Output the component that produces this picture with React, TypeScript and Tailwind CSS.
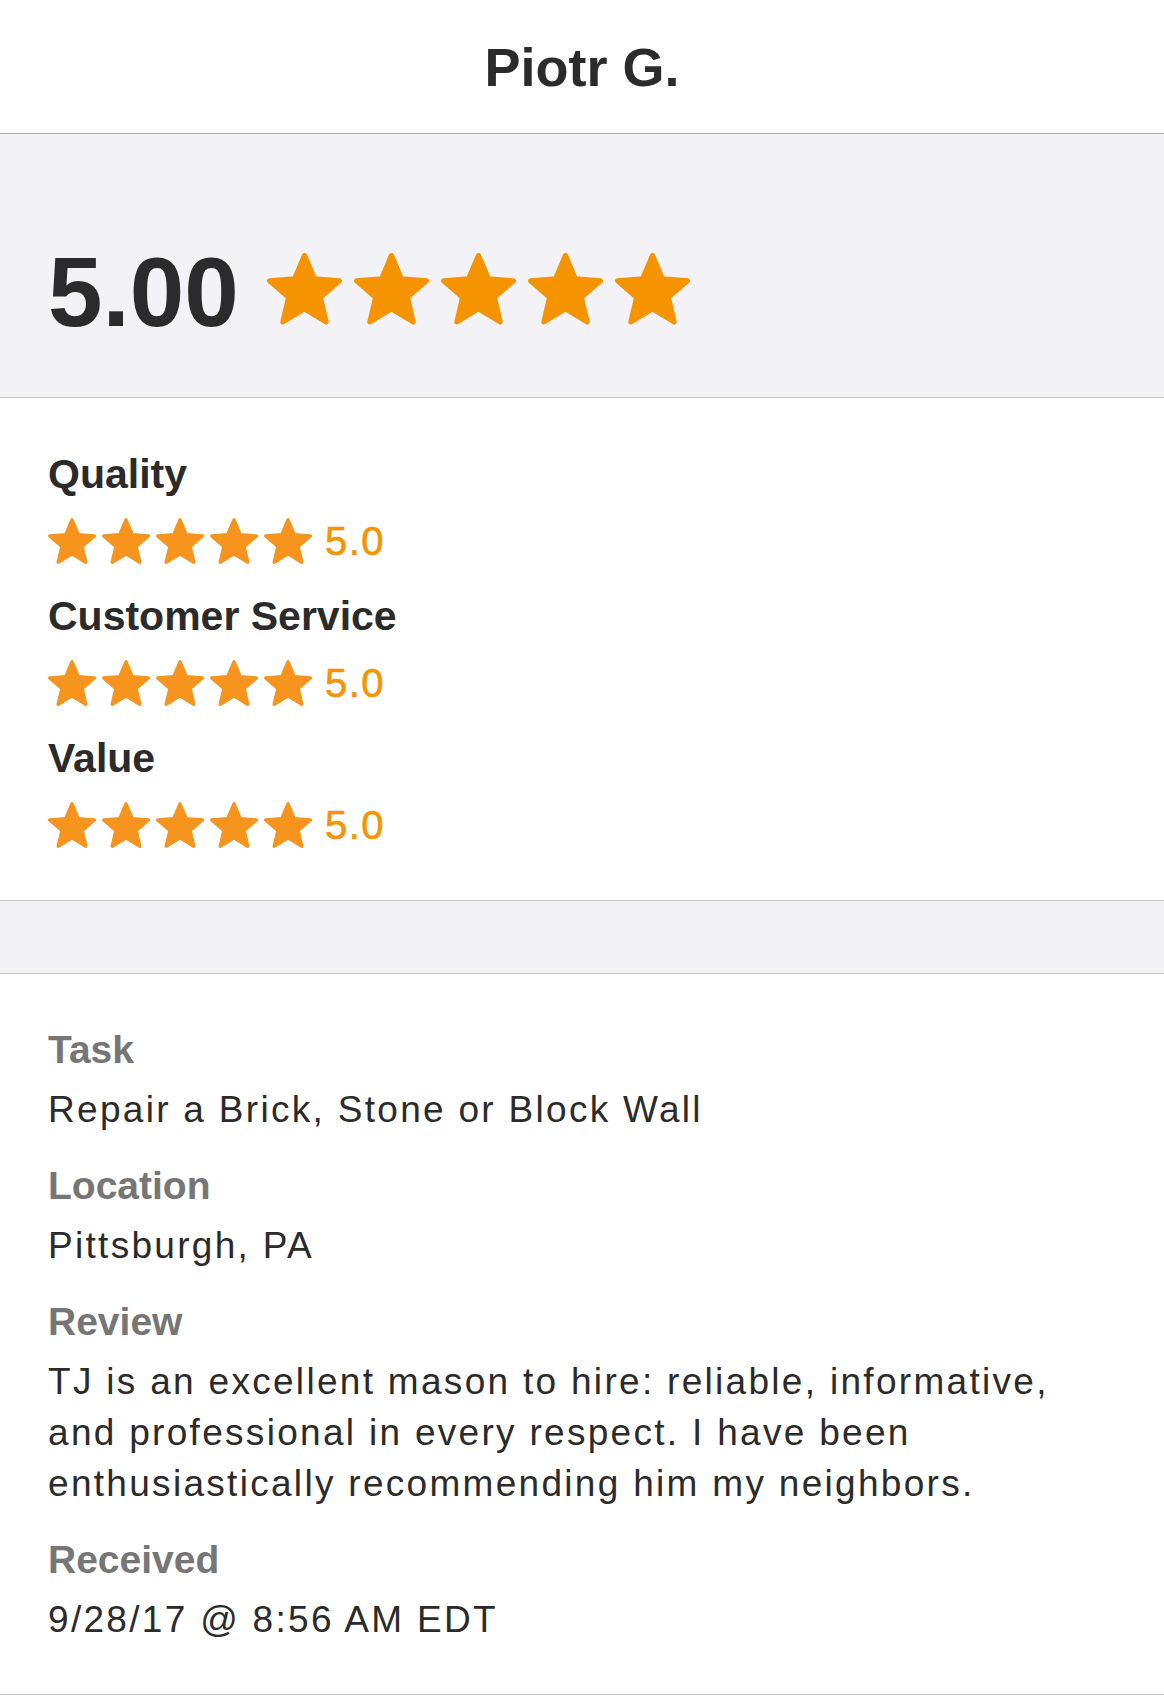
const STAR = "M12 17.27L18.18 21l-1.64-7.03L22 9.24l-7.19-.61L12 2 9.19 8.63 2 9.24l5.46 4.73L5.82 21z";

function Star({ className, color }: { className: string; color: string }) {
  return (
    <svg viewBox="1.25 1.25 21.5 20.5" className={className}>
      <path d={STAR} fill={color} stroke={color} strokeWidth={1.5} strokeLinejoin="round" />
    </svg>
  );
}

function SubRating({ label }: { label: string }) {
  return (
    <div>
      <div className="text-[41px] leading-none font-bold text-[#2b2b2b]">{label}</div>
      <div className="mt-[23px] flex items-center h-[46px]">
        <div className="flex gap-[6px]">
          {[0, 1, 2, 3, 4].map((i) => (
            <Star key={i} className="w-[48px] h-[46px]" color="#f7941e" />
          ))}
        </div>
        <span className="ml-[13px] text-[40px] leading-none tracking-[1.5px] text-[#f59300] [-webkit-text-stroke:0.6px_#f59300]">
          5.0
        </span>
      </div>
    </div>
  );
}

function Detail({ label, children }: { label: string; children: React.ReactNode }) {
  return (
    <div>
      <div className="text-[39px] leading-none font-bold text-[#767676]">{label}</div>
      <div className="mt-[15px] text-[37px] leading-[51px] tracking-[2.3px] text-[#2b2b2b]">{children}</div>
    </div>
  );
}

export default function App() {
  return (
    <div className="w-[1164px] min-h-[1696px] bg-white font-['Liberation_Sans',Arial,sans-serif]">
      {/* header */}
      <div className="h-[134px] border-b border-[#aeaeb2] flex items-center justify-center">
        <h1 className="text-[54px] leading-none font-bold text-[#2b2b2b]">Piotr G.</h1>
      </div>

      {/* overall score */}
      <div className="bg-[#f2f2f7] border-b border-[#c7c7cc] pt-[111px] pb-[57px] px-[48px]">
        <div className="flex items-start h-[95px]">
          <span className="text-[98px] leading-none font-bold -mt-[2px] text-[#2b2b2b]">5.00</span>
          <div className="ml-[28px] mt-[8px] flex gap-[12px]">
            {[0, 1, 2, 3, 4].map((i) => (
              <Star key={i} className="w-[75px] h-[71.5px]" color="#f59300" />
            ))}
          </div>
        </div>
      </div>

      {/* sub ratings */}
      <div className="pt-[56px] pb-[52px] px-[48px] flex flex-col gap-[32px] border-b border-[#c7c7cc]">
        <SubRating label="Quality" />
        <SubRating label="Customer Service" />
        <SubRating label="Value" />
      </div>

      <div className="h-[73px] bg-[#f2f2f7] border-b border-[#c7c7cc]" />

      {/* details */}
      <div className="pt-[56px] pb-[49px] px-[48px] flex flex-col gap-[31px] border-b border-[#c7c7cc]">
        <Detail label="Task">Repair a Brick, Stone or Block Wall</Detail>
        <Detail label="Location">Pittsburgh, PA</Detail>
        <Detail label="Review">
          TJ is an excellent mason to hire: reliable, informative,
          <br />
          and professional in every respect. I have been
          <br />
          enthusiastically recommending him my neighbors.
        </Detail>
        <Detail label="Received">9/28/17 @ 8:56 AM EDT</Detail>
      </div>
    </div>
  );
}
